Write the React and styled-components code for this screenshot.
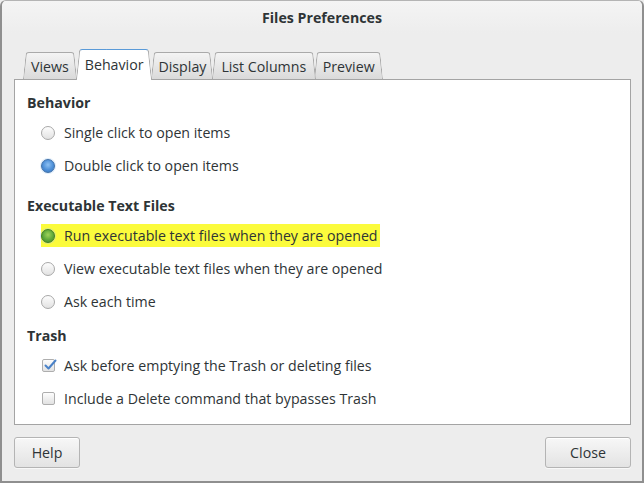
import React from "react";
import styled, { createGlobalStyle, css } from "styled-components";

const Global = createGlobalStyle`
  html, body { margin: 0; padding: 0; background: #ededed; }
  body { font-family: "Open Sans", "Noto Sans", sans-serif; font-size: 14.2px; color: #2e3436; }
  * { box-sizing: border-box; }
`;

const Window = styled.div`
  width: 644px;
  height: 483px;
  display: flex;
  flex-direction: column;
  background: #ededed;
  border: 2px solid #8f8f8f;
  border-top: 1px solid #b4b4b4;
  border-radius: 6px 6px 0 0;
  overflow: hidden;
`;

const TitleBar = styled.div`
  height: 32px;
  display: flex;
  align-items: center;
  justify-content: center;
  font-weight: 700;
  font-size: 14.2px;
  color: #2e3436;
  background: linear-gradient(#f4f4f4, #ededed);
`;

const Body = styled.div`
  flex: 1;
  display: flex;
  flex-direction: column;
  padding: 0 11px 13px 12px;
`;

const TabRow = styled.div`
  height: 46px;
  display: flex;
  align-items: flex-end;
  padding-left: 9px;
  position: relative;
  z-index: 2;
`;

const Tab = styled.div`
  position: relative;
  height: ${(p) => (p.$active ? 31 : 28)}px;
  margin-bottom: -1px;
  margin-right: -1px;
  padding: 0 ${(p) => p.$pad}px;
  display: flex;
  align-items: center;
  padding-top: ${(p) => (p.$active ? 0 : 1)}px;
  color: #2e3436;
  z-index: ${(p) => (p.$active ? 3 : p.$z)};
  white-space: nowrap;

  &::before, &::after {
    content: "";
    position: absolute;
    top: 0;
    bottom: ${(p) => (p.$active ? 0 : 1)}px;
    z-index: -1;
    transform-origin: bottom;
    border-top: 1px solid ${(p) => (p.$active ? "#5a9ad8" : "#aaaaaa")};
    ${(p) =>
      p.$active
        ? css`background: #ffffff;`
        : css`background: linear-gradient(#f4f4f4, #dadada);`}
  }
  &::before {
    left: 0;
    right: 45%;
    border-left: 1px solid #a6a6a6;
    border-top-left-radius: 3px;
    transform: skewX(-6deg);
  }
  &::after {
    left: 45%;
    right: 0;
    border-right: 1px solid #a6a6a6;
    border-top-right-radius: 3px;
    transform: skewX(6deg);
  }
`;

const Panel = styled.div`
  flex: 1;
  position: relative;
  z-index: 1;
  background: #ffffff;
  border: 1px solid #a4a4a4;
  padding: 13px 0 0 12px;
  display: flex;
  flex-direction: column;
`;

const Section = styled.div`
  display: flex;
  flex-direction: column;
  margin-top: ${(p) => p.$gap || 0}px;
`;

const Heading = styled.div`
  height: 20px;
  line-height: 20px;
  font-weight: 700;
  margin-bottom: 3px;
`;

const Row = styled.div`
  height: 33px;
  display: flex;
  align-items: center;
  padding-left: 14px;
`;

const Option = styled.label`
  display: inline-flex;
  align-items: center;
  gap: 9px;
  height: 23px;
  padding-right: 2px;
  background: ${(p) => (p.$highlight ? "#fbfb3c" : "transparent")};
`;

const Radio = styled.span`
  width: 14px;
  height: 14px;
  border-radius: 50%;
  flex: none;
  position: relative;
  border: 1px solid ${(p) => (p.$tone === "blue" ? "#3d6fa8" : p.$tone === "green" ? "#3e7d2a" : "#a8a8a8")};
  background: ${(p) =>
    p.$tone === "blue"
      ? "radial-gradient(circle at 50% 40%, #8cc0f2 0%, #4d8fd8 55%, #3a76be 100%)"
      : p.$tone === "green"
      ? "radial-gradient(circle at 50% 40%, #9fd25a 0%, #5ea83a 55%, #3e8a2a 100%)"
      : "linear-gradient(#fdfdfd, #e2e2e2)"};
  box-shadow: ${(p) => (p.$tone ? "0 0 0 1px rgba(160,200,240,0.35)" : "none")};
`;

const Box = styled.span`
  width: 13px;
  height: 13px;
  flex: none;
  border: 1px solid #aeaeae;
  border-radius: 2px;
  background: linear-gradient(#fdfdfd, #e2e2e2);
  position: relative;
  display: inline-flex;
  align-items: center;
  justify-content: center;
  margin-left: 1px;
  & svg { position: absolute; left: 0px; top: -2px; }
`;

const Footer = styled.div`
  margin-top: 12px;
  display: flex;
  justify-content: space-between;
`;

const Button = styled.button`
  height: 31px;
  width: ${(p) => p.$w}px;
  font-family: inherit;
  font-size: 14.2px;
  color: #2e3436;
  border: 1px solid #b4b4b4;
  border-radius: 3px;
  background: linear-gradient(#f7f7f7, #e3e3e3);
  box-shadow: inset 0 1px 0 #ffffff, 0 1px 0 rgba(255,255,255,0.6);
  padding: 0;
`;

const Check = () => (
  <svg width="14" height="14" viewBox="0 0 14 14">
    <path d="M2.5 7.5 L5.5 10.5 L12.5 2.5" fill="none" stroke="#4a82c8" strokeWidth="2" strokeLinecap="round" strokeLinejoin="round" />
  </svg>
);

const tabs = [
  { label: "Views", pad: 8 },
  { label: "Behavior", pad: 9, active: true },
  { label: "Display", pad: 7 },
  { label: "List Columns", pad: 9 },
  { label: "Preview", pad: 8.5 },
];

export default function App() {
  return (
    <>
      <Global />
      <Window>
        <TitleBar>Files Preferences</TitleBar>
        <Body>
          <TabRow>
            {tabs.map((t, i) => (
              <Tab key={t.label} $active={t.active} $pad={t.pad} $z={10 - i}>
                {t.label}
              </Tab>
            ))}
          </TabRow>
          <Panel>
            <Section>
              <Heading>Behavior</Heading>
              <Row>
                <Option><Radio />Single click to open items</Option>
              </Row>
              <Row>
                <Option><Radio $tone="blue" />Double click to open items</Option>
              </Row>
            </Section>
            <Section $gap={14}>
              <Heading>Executable Text Files</Heading>
              <Row>
                <Option $highlight><Radio $tone="green" />Run executable text files when they are opened</Option>
              </Row>
              <Row>
                <Option><Radio />View executable text files when they are opened</Option>
              </Row>
              <Row>
                <Option><Radio />Ask each time</Option>
              </Row>
            </Section>
            <Section $gap={8}>
              <Heading>Trash</Heading>
              <Row>
                <Option><Box><Check /></Box>Ask before emptying the Trash or deleting files</Option>
              </Row>
              <Row>
                <Option><Box />Include a Delete command that bypasses Trash</Option>
              </Row>
            </Section>
          </Panel>
          <Footer>
            <Button $w={66}>Help</Button>
            <Button $w={86}>Close</Button>
          </Footer>
        </Body>
      </Window>
    </>
  );
}
